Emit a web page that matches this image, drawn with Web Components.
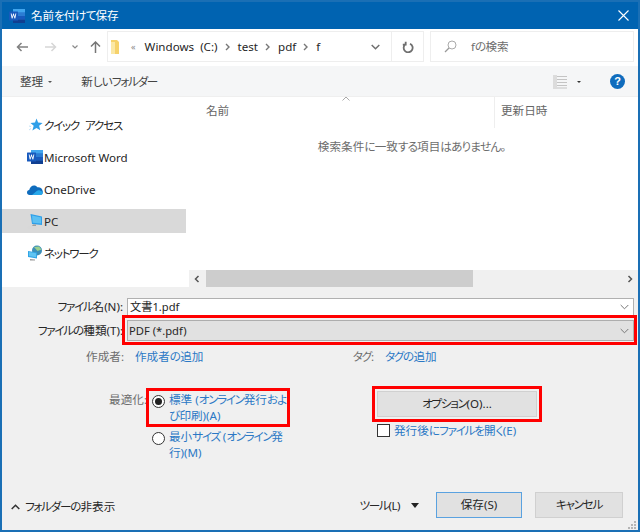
<!DOCTYPE html>
<html lang="ja"><head><meta charset="utf-8">
<style>
html,body{margin:0;padding:0;width:640px;height:532px;overflow:hidden;background:#f0f0f0}
body{font:11.6px/16px "Noto Sans","Noto Sans CJK JP",sans-serif;font-feature-settings:"palt";color:#262626}
</style></head><body>
<save-dialog>
  <title-bar slot="title" heading="名前を付けて保存"></title-bar>
  <nav-bar slot="nav"></nav-bar>
  <tool-bar slot="tools"></tool-bar>
  <nav-pane slot="side">
    <nav-item icon="star" style="margin-top:16px;word-spacing:3px">クイック アクセス</nav-item>
    <nav-item icon="word">Microsoft Word</nav-item>
    <nav-item icon="cloud">OneDrive</nav-item>
    <nav-item icon="pc" selected>PC</nav-item>
    <nav-item icon="net">ネットワーク</nav-item>
  </nav-pane>
  <file-list slot="files"></file-list>
  <save-form slot="form"></save-form>
  <dialog-footer slot="footer"></dialog-footer>
</save-dialog>
<script>
const tight=s=>s.replace(/[\u30a0-\u30ff]+/g,m=>`<span style="letter-spacing:-1.3px">${m}</span>`).replace(/[\u3040-\u309f]+/g,m=>`<span style="letter-spacing:-.8px">${m}</span>`);
document.querySelectorAll('nav-item').forEach(n=>n.innerHTML=tight(n.innerHTML));
const def=(name,html)=>customElements.define(name,class extends HTMLElement{
  constructor(){super();this.attachShadow({mode:'open'}).innerHTML=tight(typeof html==='function'?html(this):html);}
});
const WORD=`<svg width="16" height="16" viewBox="0 0 16 16"><rect x="4" y="1" width="12" height="14" fill="#2b7cd3"/><rect x="4" y="1" width="12" height="3.5" fill="#41a5ee"/><rect x="4" y="4.5" width="12" height="3.5" fill="#2b7cd3"/><rect x="4" y="8" width="12" height="3.5" fill="#185abd"/><rect x="4" y="11.5" width="12" height="3.5" fill="#103f91"/><rect x="0" y="3.5" width="9" height="9" rx=".5" fill="#185abd"/><path d="M1.700 5.500l1 5h.8l1-3.200 1 3.200h.8l1-5h-.9l-.6 3.300-1-3.300h-.6l-1 3.300-.6-3.300z" fill="#fff"/></svg>`;
const ICONS={
 star:`<svg width="16" height="16" viewBox="0 0 16 16"><path d="M9.500 1.500l1.600 4.100 4.500.3-3.500 2.900 1.200 4.500-3.800-2.400-4.100 2.500 1.300-4.700L3.500 5.900l4.500-.3z" fill="#2f9fe8"/><path d="M2 13l2-1.500M2 9l2 .5" stroke="#c5e3f7"/></svg>`,
 word:WORD,
 cloud:`<svg width="16" height="16" viewBox="0 0 16 16"><path d="M2.600 14C1 14 0 12.900 0 11.500 0 10.200 .9 9.200 2.200 9 2.800 6.500 4.800 4.500 7 4.500c1.500 0 2.600.6 3.400 1.800 2.700-.4 5.100 1.200 5.400 4.200.2 2.200-.9 3.500-2.400 3.500z" fill="#0f6cbd"/><path d="M5 14L9.700 10c1-.9 2.300-1 3.400-.4l2.600 1.300c.3 1.600-.6 3.100-2.400 3.100z" fill="#28a8ea"/></svg>`,
 pc:`<svg width="17" height="16" viewBox="0 0 17 16"><path d="M1 14.500l4-2.500h7l-2 3.500H3z" fill="#d8d8d8"/><path d="M4.500 1l11.500 2.500v8.500L6 11z" fill="#2f9fe8"/><path d="M6 2.500l9 2v6L6.700 9.700z" fill="#5cc0f2"/><path d="M7 11.500h3v1.500H6z" fill="#a0a0a0"/></svg>`,
 net:`<svg width="16" height="16" viewBox="0 0 16 16"><circle cx="10" cy="5.500" r="5" fill="#3d8fb8"/><path d="M7 2l5-.5 2.500 3-4 1.500z" fill="#9ad08f"/><path d="M1 6l9 1.500v6L1 12z" fill="#31a5e6"/><path d="M2 7.100l7 1.200v4l-7-1.200z" fill="#60c4f2"/><path d="M3 14l5 .5v1H3z" fill="#999"/></svg>`
};
def('save-dialog',`<style>
:host{display:flex;flex-direction:column;width:640px;height:532px;box-sizing:border-box;border:2px solid #1a6fb5;background:#f0f0f0;position:relative}
.main{display:flex;height:190px;background:#fff;flex:none}
.side{width:184px;flex:none}.files{flex:1;min-width:0}
</style><slot name="title"></slot><slot name="nav"></slot><slot name="tools"></slot>
<div class="main"><div class="side"><slot name="side"></slot></div><div class="files"><slot name="files"></slot></div></div>
<slot name="form"></slot><slot name="footer"></slot>`);
def('title-bar',h=>`<style>
:host{display:flex;align-items:center;height:27px;background:#0063b1;color:#fff;flex:none}
.i{margin:0 6px 0 7px;display:flex}
.t{flex:1;letter-spacing:-.2px}
svg.x{margin-right:9px}
</style><span class="i">${WORD}</span><span class="t">${h.getAttribute('heading')||''}</span>
<svg class="x" width="11" height="11" viewBox="0 0 11 11"><path d="M.5.500l10 10M10.500.500l-10 10" stroke="#fff" stroke-width="1.100"/></svg>`);
const chev=`<svg width="5" height="8" viewBox="0 0 5 8"><path d="M1 1l3 3-3 3" fill="none" stroke="#777" stroke-width="1.400"/></svg>`;
def('nav-bar',`<style>
:host{display:flex;align-items:center;height:37px;background:#fff;box-sizing:border-box;padding:2px 4px 4px 0;flex:none}
.btns{display:flex;align-items:center;width:105px;flex:none}
.btns svg{display:block}
.addr{display:flex;align-items:center;flex:1;height:31px;box-sizing:border-box;border:1px solid #eeeeee;min-width:0}
.path{display:flex;align-items:center;flex:1;min-width:0}
.path span{white-space:nowrap}
.path svg{margin:0 8px 0 7px}
.ref{width:32px;height:31px;box-sizing:border-box;border:1px solid #eeeeee;border-left:0;display:flex;align-items:center;justify-content:center;flex:none}
.srch{width:204px;height:31px;box-sizing:border-box;border:1px solid #eeeeee;margin-left:6px;display:flex;align-items:center;color:#6d6d6d;flex:none}
</style>
<div class="btns">
<svg style="margin-left:14px" width="12" height="10" viewBox="0 0 12 10"><path d="M12 5H1.500M5.500 1L1.500 5l4 4" fill="none" stroke="#808080" stroke-width="1.500"/></svg>
<svg style="margin-left:17px" width="12" height="10" viewBox="0 0 12 10"><path d="M0 5h10.500M6.500 1l4 4-4 4" fill="none" stroke="#d6d6d6" stroke-width="1.500"/></svg>
<svg style="margin-left:15px" width="6" height="4" viewBox="0 0 6 4"><path d="M.5.500L3 3 5.500.500" fill="none" stroke="#8a8a8a" stroke-width="1.200"/></svg>
<svg style="margin-left:12px" width="11" height="12" viewBox="0 0 11 12"><path d="M5.500 12V1.500M1 5.500l4.500-4.500 4.500 4.500" fill="none" stroke="#777" stroke-width="1.500"/></svg>
</div>
<div class="addr">
<svg style="margin-left:3px;flex:none" width="10" height="16" viewBox="0 0 10 16"><path d="M0 1h6l2 2v12H0z" fill="#f6d26b"/><rect x="0" y="3" width="4" height="12" fill="#fbe8a6"/></svg>
<span style="margin:0 9px 0 10px;color:#888;font-size:9px;flex:none">«</span>
<div class="path"><span>Windows&nbsp; (C:)</span>${chev}<span>test</span>${chev}<span>pdf</span>${chev}<span>f</span></div>
<svg style="margin-right:11px;flex:none" width="9" height="6" viewBox="0 0 9 6"><path d="M.7 1L4.500 4.700 8.300 1" fill="none" stroke="#6f6f6f" stroke-width="1.500"/></svg>
</div>
<div class="ref"><svg width="12" height="12" viewBox="0 0 12 12"><path d="M2.800 2.800A4.500 4.500 0 1 0 7.500 2.200M3.200 .2v3H.3" transform="translate(.5 .5)" fill="none" stroke="#6f6f6f" stroke-width="1.800"/></svg></div>
<div class="srch"><svg style="margin-left:13px" width="13" height="13" viewBox="0 0 13 13"><circle cx="8" cy="5" r="4" fill="none" stroke="#aaa"/><path d="M5 8l-4 4" stroke="#999" stroke-width="1.200"/></svg><span style="margin-left:14px">fの検索</span></div>`);
def('tool-bar',`<style>
:host{display:flex;align-items:center;height:31px;background:#f5f6f7;border-bottom:1px solid #efefef;box-sizing:border-box;color:#444;flex:none;padding-top:1px}
.a{margin-left:18px}.b{margin-left:5px;width:0;height:0;border:2px solid transparent;border-top:2.500px solid #555;border-bottom:0}
.c{margin-left:29px;flex:1}
.help{width:15px;height:15px;border-radius:50%;background:#0f6cbd;color:#fff;font:bold 11px/15px "Liberation Sans",sans-serif;text-align:center;margin:0 13px 0 0}
.v{display:flex;margin-right:10px}
.b2{margin-right:29px;width:0;height:0;border:2px solid transparent;border-top:2.500px solid #333;border-bottom:0}
</style><span class="a">整理</span><span class="b"></span><span class="c">新しいフォルダー</span>
<span class="v"><svg width="14" height="14" viewBox="0 0 14 14"><rect width="4" height="14" fill="#dcdcdc"/><path d="M4 1.500h10M4 4.500h10M4 7.500h10M4 10.500h10M4 13h10" stroke="#c4c4c4"/></svg></span>
<span class="b2"></span><span class="help">?</span>`);
def('nav-pane',`<style>:host{display:block;height:100%;box-sizing:border-box}</style><slot></slot>`);
def('nav-item',h=>`<style>
:host{display:flex;align-items:center;height:24px;margin-bottom:8px;box-sizing:border-box;padding-top:1px}
:host([selected]){background:#d9d9d9}
.i{width:17px;height:16px;margin:-1px 1px 0 24px;display:flex;justify-content:center;flex:none}
</style><span class="i">${ICONS[h.getAttribute('icon')]||''}</span><span><slot></slot></span>`);
def('file-list',`<style>
:host{display:flex;flex-direction:column;height:100%;position:relative;color:#666}
.h{display:flex;height:31px;flex:none;box-sizing:border-box;padding-left:20px;line-height:28px}
.n{width:288px}.d{border-left:1px solid #eee;padding-left:6px}
.up{position:absolute;left:156px;top:-1px}
.e{flex:1;text-align:center;padding:11px 0 0 0;color:#6d6d6d}
.sb{height:17px;background:#f0f0f0;flex:none;display:flex;align-items:center;margin-left:3px}
.sb .th{height:17px;background:#cdcdcd;width:267px;flex:none}
.sb .sp{flex:1}
.sb svg{flex:none}
</style>
<div class="h"><span class="n">名前</span><span class="d">更新日時</span></div>
<svg class="up" width="8" height="5" viewBox="0 0 8 5"><path d="M.5 4.500L4 1l3.500 3.500" fill="none" stroke="#aaa"/></svg>
<div class="e">検索条件に一致する項目はありません。</div>
<div class="sb"><svg style="margin-left:5px;margin-right:6px" width="6" height="8" viewBox="0 0 6 8"><path d="M4.500 1l-3 3 3 3" fill="none" stroke="#555" stroke-width="1.500"/></svg><div class="th"></div><span class="sp"></span><svg style="margin-right:5px" width="6" height="8" viewBox="0 0 6 8"><path d="M1.500 1l3 3-3 3" fill="none" stroke="#555" stroke-width="1.500"/></svg></div>`);
const dn=`<svg width="9" height="6" viewBox="0 0 9 6"><path d="M.7 1l3.800 3.800L8.300 1" fill="none" stroke="#777"/></svg>`;
def('save-form',`<style>
:host{display:block;flex:1;box-sizing:border-box;padding:11px 4px 0 0;position:relative}
.row{display:grid;grid-template-columns:125px 1fr;align-items:center}
.l{text-align:right;padding-right:4px;white-space:nowrap}
.f{display:flex;align-items:center;box-sizing:border-box;padding-left:2px;justify-content:space-between}
.f span.v{font-size:11.2px}
.in{height:18px;background:#fff;border:1px solid #b0b0b0}
.sel{height:21px;background:#e1e1e1;border:1px solid #adadad;padding-left:1px}
.f svg{margin-right:4px}
.r2{margin-top:4px}
.meta{display:grid;grid-template-columns:122px 220px 30px 1fr;margin-top:8px;height:16px;color:#6d6d6d}
.meta .ml{text-align:right;white-space:nowrap}
.meta a{color:#2b78c5;margin-left:11px;white-space:nowrap}
.opt{display:flex;margin-top:27px}
.ol{width:145px;text-align:right;color:#6d6d6d;flex:none;white-space:nowrap}
.radios{width:138px;flex:none;padding-left:5px;box-sizing:border-box}
.radio{display:flex;color:#2b78c5;margin-bottom:5px}
.dot{flex:none;width:13px;height:13px;box-sizing:border-box;border:1px solid #333;border-radius:50%;background:#fff;margin:3px 4px 0 0;display:flex;align-items:center;justify-content:center}
.dot i{width:7px;height:7px;border-radius:50%;background:#222;display:block}
.txt{white-space:nowrap}
.right{margin:-1px 0 0 92px;width:160px;flex:none}
.btn{height:26px;box-sizing:border-box;background:#e1e1e1;border:1px solid #d0d0d0;text-align:center;line-height:24px}
.chk{display:flex;align-items:center;color:#2b78c5;margin-top:7px;height:13px;white-space:nowrap}
.chk b{width:13px;height:13px;box-sizing:border-box;border:1px solid #333;background:#fff;margin-right:4px;flex:none}
.mark{position:absolute;border:3px solid #f00;box-sizing:border-box;pointer-events:none}
</style>
<div class="row"><span class="l">ファイル名(N):</span><div class="f in"><span class="v">文書1.pdf</span>${dn}</div></div>
<div class="row r2"><span class="l">ファイルの種類(T):</span><div class="f sel"><span class="v">PDF (*.pdf)</span>${dn}</div></div>
<div class="meta"><span class="ml">作成者:</span><a>作成者の追加</a><span class="ml">タグ:</span><a>タグの追加</a></div>
<div class="opt">
<span class="ol">最適化:</span>
<div class="radios">
<div class="radio"><span class="dot"><i></i></span><span class="txt">標準 (オンライン発行およ<br>び印刷)(A)</span></div>
<div class="radio"><span class="dot"></span><span class="txt">最小サイズ (オンライン発<br>行)(M)</span></div>
</div>
<div class="right"><div class="btn">オプション(O)...</div><div class="chk"><b></b>発行後にファイルを開く(E)</div></div>
</div>
<div class="mark" style="left:120px;top:28px;width:515px;height:30px"></div>
<div class="mark" style="left:144px;top:101px;width:144px;height:39px"></div>
<div class="mark" style="left:370px;top:99px;width:170px;height:36px"></div>`);
def('dialog-footer',`<style>
:host{display:flex;align-items:center;height:38px;flex:none;box-sizing:border-box;padding:0 15px 12px 9px;position:relative}
.h{display:flex;align-items:center;flex:1;margin-top:3px}
.h svg{margin-right:5px}
.tri{width:0;height:0;border:4px solid transparent;border-top:5px solid #222;border-bottom:0;margin:0 17px 0 11px}
.btn{width:86px;height:26px;box-sizing:border-box;background:#e1e1e1;border:1px solid #d0d0d0;text-align:center;line-height:24px}
.p{border:1px solid #5aa2e0;margin-right:13px}
.c{width:88px}
.grip{position:absolute;right:2px;bottom:1px}
.tl{padding-top:1px;letter-spacing:-.5px}
</style><div class="h"><svg width="9" height="6" viewBox="0 0 9 6"><path d="M.7 5L4.500 1.200 8.300 5" fill="none" stroke="#333" stroke-width="1.500"/></svg><span>フォルダーの非表示</span></div>
<span class="tl">ツール(L)</span><span class="tri"></span><div class="btn p">保存(S)</div><div class="btn c">キャンセル</div>
<svg class="grip" width="8" height="8" viewBox="0 0 8 8" fill="#b5b5b5"><rect x="6" y="0" width="2" height="2"/><rect x="3" y="3" width="2" height="2"/><rect x="6" y="3" width="2" height="2"/><rect x="0" y="6" width="2" height="2"/><rect x="3" y="6" width="2" height="2"/><rect x="6" y="6" width="2" height="2"/></svg>`);
</script>
</body></html>
